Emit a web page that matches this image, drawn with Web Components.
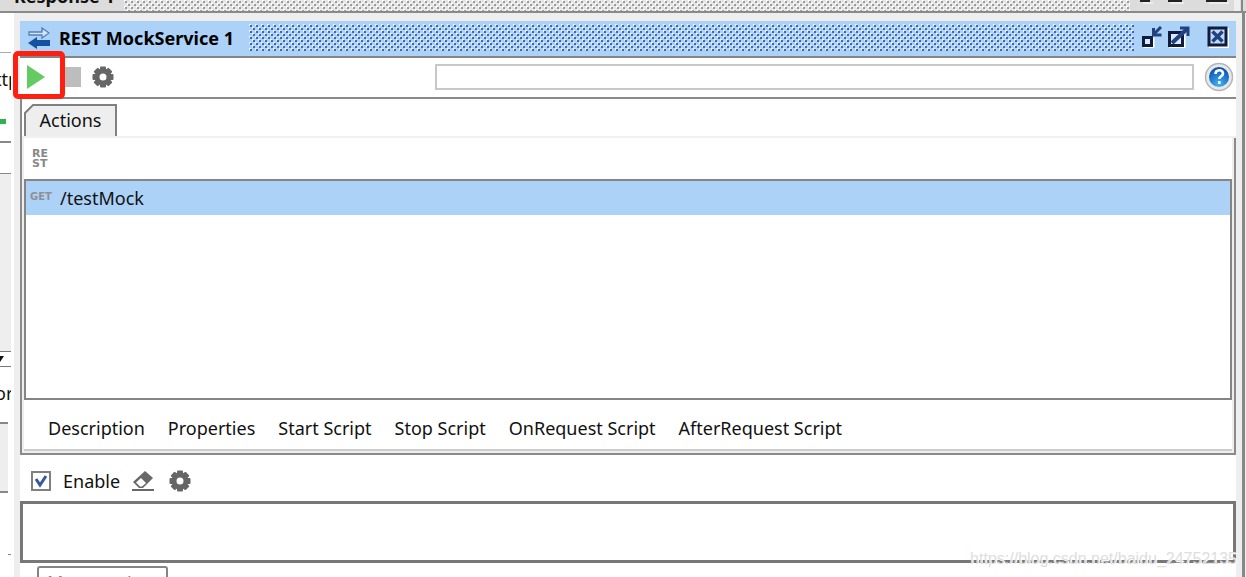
<!DOCTYPE html>
<html lang="en">
<head>
<meta charset="utf-8">
<title>REST MockService 1</title>
<style>
html, body { margin: 0; height: 100%; background: #fff; overflow: hidden; }
body { font: 18px/24px "Noto Sans", "Open Sans", sans-serif; color: #111; }
</style>
</head>
<body>
<mock-desktop></mock-desktop>
<script>
const define = (name, html) => {
  const template = document.createElement('template');
  template.innerHTML = '<style>*,*::after{box-sizing:border-box}button,input,textarea{font:inherit;color:inherit;margin:0;outline:0}button{border:0;background:none;padding:0;display:block}svg{display:block}</style>' + html;
  customElements.define(name, class extends HTMLElement {
    constructor() {
      super();
      this.attachShadow({ mode: 'open' }).append(template.content.cloneNode(true));
    }
  });
};

define('gear-icon', `
<style>:host{display:block;width:22px;height:22px;color:#666}</style>
<svg width="22" height="22" viewBox="-11 -11 22 22" fill="currentColor">
  <circle r="6" fill="none" stroke="currentColor" stroke-width="5"/>
  <g><rect x="-3" y="-10.500" width="6" height="4" rx="1"/><rect x="-3" y="6.500" width="6" height="4" rx="1"/><rect x="-10.500" y="-3" width="4" height="6" rx="1"/><rect x="6.500" y="-3" width="4" height="6" rx="1"/></g>
  <g transform="rotate(45)"><rect x="-3" y="-10.500" width="6" height="4" rx="1"/><rect x="-3" y="6.500" width="6" height="4" rx="1"/><rect x="-10.500" y="-3" width="4" height="6" rx="1"/><rect x="6.500" y="-3" width="4" height="6" rx="1"/></g>
</svg>`);

define('drag-texture', `
<style>
:host{display:block;flex:1;--dot:#4468b0;--lite:#e8f3ff}
svg{width:100%;height:100%}
.d{fill:var(--dot)}.l{fill:var(--lite)}
</style>
<svg><defs><pattern id="p" width="6" height="6" patternUnits="userSpaceOnUse">
<rect class="l" x="0" y="0" width="2" height="2"/><rect class="d" x="1" y="1" width="2" height="2"/>
<rect class="l" x="3" y="3" width="2" height="2"/><rect class="d" x="4" y="4" width="2" height="2"/>
</pattern></defs><rect width="100%" height="100%" fill="url(#p)"/></svg>`);

define('back-title', `
<style>
:host{display:flex;height:13px;overflow:hidden;align-items:flex-end;background:#dcdcdc;border-bottom:2px solid #8a8a8a;padding-left:14px}
b{padding-bottom:3px;width:110px;white-space:nowrap;flex:none}
drag-texture{height:11px;background:#e6e6e6;--dot:#9c9c9c;--lite:#fff}
svg{flex:none;width:116px;height:11px}
</style>
<b>Response 1</b><drag-texture></drag-texture>
<svg viewBox="0 0 116 11"><path d="M10 1h10M38 1h14M76 1h21" stroke="#222" stroke-width="2"/><path d="M13 3h10M40 3h14M79 3h20" stroke="#fff"/><path d="M107 0v11" stroke="#eee" stroke-width="6"/><path d="M112 0v11" stroke="#888" stroke-width="2"/></svg>`);

define('back-edge', `
<style>
:host{display:flex;flex-direction:column;width:14px;overflow:hidden;background:#fff;padding-right:3px}
div{flex:none;overflow:hidden;white-space:nowrap}
.gap{height:40px;border-bottom:1px solid #aaa}
.url{height:62px;padding-top:14px}
.url span{margin-left:-5px}
.add{height:26px;padding-top:4px}.add i{display:block;width:6px;height:5px;background:#2fb14e}
.row{height:33px;border-top:2px solid #888;border-bottom:1px solid #888}
.pane{height:177px;background:#eee}
.drop{height:16px;border-top:1px solid #777;border-bottom:1px solid #777}
.word{height:55px;padding-top:14px}
.word span{margin-left:-5px}
.side{height:71px;background:#eee;border-top:2px solid #888;border-bottom:2px solid #888;margin-right:3px}
.rest{height:62px;border-bottom:1px solid #888;margin-left:8px}
</style>
<div class="gap"></div><div class="url"><span>ttp</span></div><div class="add"><i></i></div><div class="row"></div><div class="pane"></div>
<div class="drop"><svg width="6" height="13"><path d="M0 4h4l-4 6z" fill="#111"/></svg></div><div class="word"><span>or</span></div><div class="side"></div><div class="rest"></div>`);

define('window-title', `
<style>
:host{display:flex;align-items:center;height:37px;background:#acd2f8;border-bottom:2px solid #858585;padding:0 7px 2px 8px}
b{margin:0 15px 0 9px;color:#000;white-space:nowrap}
drag-texture{height:27px;margin-right:7px}
button{padding-bottom:2px}button+button{margin-left:5px}button.close{margin-left:17px}
</style>
<svg width="22" height="22" viewBox="0 0 22 22"><path d="M1 5h13V1l7 5-7 5V8H1z" fill="#d5e6fa" stroke="#5280ba" stroke-width="1.3"/><path d="M22 13v6H9v3l-9-6 9-6v3z" fill="#1551a0"/></svg>
<b><slot></slot></b><drag-texture></drag-texture>
<button aria-label="Minimize"><svg width="22" height="22"><path d="M4 13h8v8H4z" fill="none" stroke="#fff" stroke-width="3"/><path d="M2.500 11.500h8v8h-8z" fill="#d8eaff" stroke="#111b3d" stroke-width="3"/><path d="M20 1l-7 7M12.500 2v7h8" stroke="#22417e" stroke-width="3" fill="none"/></svg></button>
<button aria-label="Maximize"><svg width="22" height="22"><path d="M3 8h13v13H3z" fill="none" stroke="#fff" stroke-width="3"/><path d="M1.500 6.500h13v13h-13z" fill="#d8eaff" stroke="#111b3d" stroke-width="3"/><path d="M4 17L19 3" stroke="#22417e" stroke-width="4"/><path d="M12 2h8v8" stroke="#22417e" stroke-width="3" fill="none"/></svg></button>
<button class="close" aria-label="Close"><svg width="22" height="22"><path d="M3 3h18v18H3z" fill="none" stroke="#fff" stroke-width="2"/><path d="M2 2h17v17H2z" fill="#bcdafa" stroke="#111b3d" stroke-width="3"/><path d="M5.500 5.500l10 10M15.500 5.500l-10 10" stroke="#22417e" stroke-width="3.500"/></svg></button>`);

define('run-bar', `
<style>
:host{display:flex;align-items:center;height:39px;padding:0 2px 2px 6px;background:#fff}
.run{position:relative}
.run::after{content:"";position:absolute;left:-13px;top:-14px;width:52px;height:48px;border:5px solid #fd2010;border-radius:5px}
.stop{width:16px;height:20px;background:#bdbdbd;margin:0 11px 0 19px}
input{flex:1;min-width:0;height:26px;border:2px solid #c8c8c8;background:#fff;margin:0 10px 0 321px}
</style>
<button class="run" aria-label="Start"><svg width="20" height="24"><path d="M1 0l18 12L1 24z" fill="#64ca62"/></svg></button>
<button class="stop" aria-label="Stop"></button>
<button aria-label="Options"><gear-icon></gear-icon></button>
<input aria-label="Status">
<button aria-label="Help"><svg width="30" height="30" viewBox="0 0 30 30"><defs><radialGradient id="g" cx=".5" cy=".85" r=".8"><stop offset="0" stop-color="#3fb5f5"/><stop offset="1" stop-color="#0a50b0"/></radialGradient></defs><circle cx="15" cy="15" r="13.500" fill="#e8e8e8" stroke="#b5b5b5" stroke-width="1.500"/><circle cx="15" cy="15" r="10" fill="url(#g)"/><path d="M11.500 12c0-5 7.500-5 7.500-.5 0 3-3.700 2.500-3.700 5.500M15.300 19v3" fill="none" stroke="#fff" stroke-width="2.600"/></svg></button>`);

define('action-tab', `
<style>
:host{display:flex;height:39px;padding:5px 0 0 2px;border-bottom:2px solid #f0f0f0}
button{position:relative;width:93px;height:32px;padding-bottom:1px}
svg{position:absolute;inset:0}span{position:relative}
</style>
<button><svg width="93" height="32"><path d="M1 32V9l8-8h83v31" fill="#eee" stroke="#808080" stroke-width="2"/></svg><span><slot></slot></span></button>`);

define('action-list', `
<style>
:host{display:flex;flex-direction:column;min-height:150px;background:#fff}
.tools{height:41px;padding:11px 0 0 8px;flex:none}
.badge{font:bold 11px/10px "DejaVu Sans",sans-serif;color:#888;text-align:left}
.list{flex:1;border:2px solid #858585}
.item{display:flex;align-items:center;height:34px;width:100%;background:#acd2f8}
small{font:bold 10px/12px "DejaVu Sans",sans-serif;color:#918f92;width:28px;margin-left:4px;padding-bottom:3px;text-align:left;margin-right:2px}
</style>
<div class="tools"><button class="badge" aria-label="Add REST action">RE<br>ST</button></div>
<div class="list"><button class="item"><small>GET</small><slot></slot></button></div>`);

define('script-tabs', `
<style>
:host{display:flex;align-items:center;gap:23px;height:51px;padding:6px 0 0 24px;border-bottom:2px solid #ccc;background:#fff}
button{white-space:nowrap}
</style>
<button>Description</button><button>Properties</button><button>Start Script</button><button>Stop Script</button><button>OnRequest Script</button><button>AfterRequest Script</button>`);

define('log-panel', `
<style>
:host{display:block;flex:none}
.bar{display:flex;align-items:center;height:46px;padding:6px 0 0 11px}
input{appearance:none;width:20px;height:20px;border:2px solid #808080;background:#fff url("data:image/svg+xml,%3Csvg xmlns='http://www.w3.org/2000/svg' width='16' height='16'%3E%3Cpath d='M3 6l4 6 6-9' fill='none' stroke='%23375a9e' stroke-width='3'/%3E%3C/svg%3E")}
label{padding-left:12px;margin-right:12px}
gear-icon{margin-left:15px}
textarea{display:block;width:100%;height:62px;border:3px solid #777;resize:none;background:#fff}
.dock{height:14px;overflow:hidden;padding:3px 0 0 17px}
.dock button{width:131px;height:30px;border:2px solid #858585;border-radius:3px;padding-top:2px;color:#888}
</style>
<div class="bar"><input id="e" type="checkbox" checked><label for="e">Enable</label>
<button aria-label="Clear"><svg width="22" height="22" viewBox="0 0 22 22"><path d="M1 12L13 1l8 7-10 10H7z" fill="#686868"/><path d="M4 12.500L9 8l5 5-4 3.500H8z" fill="#fff"/><path d="M0 20h22" stroke="#686868" stroke-width="2"/></svg></button>
<button aria-label="Log options"><gear-icon></gear-icon></button></div>
<textarea aria-label="Log"></textarea>
<div class="dock"><button>Message Log</button></div>`);

define('mock-window', `
<style>
:host{display:flex;flex-direction:column;min-width:0;background:#fff;border:solid #eee;border-width:8px 6px 0}
.panel{display:flex;flex-direction:column;flex:1;border:solid #8a8a8a;border-width:2px 0 2px 2px;min-height:0}
.body{display:flex;flex-direction:column;flex:1;min-height:0;background:#eee;border-right:2px solid #8a8a8a;padding:0 2px 2px}
action-tab,script-tabs{flex:none}action-list{flex:1}
</style>
<window-title>REST MockService 1</window-title><run-bar></run-bar>
<div class="panel"><action-tab>Actions</action-tab><div class="body"><action-list>/testMock</action-list><script-tabs></script-tabs></div></div>
<log-panel></log-panel>`);

define('mock-desktop', `
<style>
:host{display:grid;grid-template:13px minmax(0,1fr)/14px minmax(0,1fr) 4px;height:100vh;position:relative;overflow:hidden}
back-title{grid-column:1/-1}
.shade{background:linear-gradient(90deg,#888 0 3px,#eee 3px)}
.mark{position:absolute;right:9px;bottom:7px;font:16px/22px "Liberation Sans",Arial,sans-serif;color:#dedede;text-shadow:1px 1px #fff}
</style>
<back-title></back-title><back-edge></back-edge><mock-window></mock-window><div class="shade"></div>
<div class="mark">https://blog.csdn.net/baidu_24752135</div>`);
</script>
</body>
</html>
